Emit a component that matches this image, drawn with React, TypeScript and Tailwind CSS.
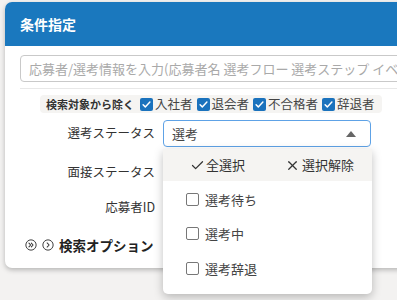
import { Check, X } from "lucide-react";

const jp = { fontFamily: '"Noto Sans CJK JP", "Noto Sans", sans-serif' };

function BlueCheck({ label }: { label: string }) {
  return (
    <label className="flex items-center gap-[2px]">
      <span className="flex h-[13px] w-[13px] items-center justify-center rounded-[2px] bg-[#1a72bd]">
        <svg viewBox="0 0 12 12" className="h-[11px] w-[11px]">
          <path d="M2.3 6.2l2.4 2.4 5-5.2" fill="none" stroke="white" strokeWidth="1.6" strokeLinecap="round" strokeLinejoin="round" />
        </svg>
      </span>
      <span className="text-[12.5px] text-[#444]">{label}</span>
    </label>
  );
}

function CircleChevron({ double }: { double?: boolean }) {
  return (
    <svg viewBox="0 0 14 14" className="h-[12px] w-[12px]">
      <circle cx="7" cy="7" r="6" fill="none" stroke="#333" strokeWidth="1.1" />
      {double ? (
        <path d="M4.6 4.8l2 2.2-2 2.2M7.4 4.8l2 2.2-2 2.2" fill="none" stroke="#333" strokeWidth="1.2" strokeLinecap="round" strokeLinejoin="round" />
      ) : (
        <path d="M6 4.6l2.3 2.4L6 9.4" fill="none" stroke="#333" strokeWidth="1.2" strokeLinecap="round" strokeLinejoin="round" />
      )}
    </svg>
  );
}

function Option({ label }: { label: string }) {
  return (
    <div className="flex h-[34.5px] items-center gap-[6px] pl-[23px]">
      <span className="h-[13px] w-[13px] rounded-[2px] border-[1.5px] border-[#777] bg-white" />
      <span className="text-[13px] text-[#444]">{label}</span>
    </div>
  );
}

export default function App() {
  return (
    <div className="h-[300px] w-[397px] overflow-hidden bg-[#f3f2f1]" style={jp}>
      <div className="ml-[5px] mt-[2px] w-[420px] rounded-tl-[7px] rounded-bl-[7px] bg-white pb-[13px] shadow-[0_2px_5px_rgba(0,0,0,0.25)]">
        <div className="flex h-[44px] items-center rounded-tl-[7px] bg-[#1a78be] pl-[15px] pt-[1px]">
          <h1 className="text-[14px] font-bold text-white">条件指定</h1>
        </div>
        <div className="pl-[15px] pt-[9px]">
          <div className="flex h-[27px] items-center overflow-hidden rounded-[4px] border border-[#c9c9c9] pl-[8px]">
            <span className="whitespace-nowrap text-[13px] text-[#a9a9a9]">
              応募者/選考情報を入力(応募者名 選考フロー 選考ステップ イベント
            </span>
          </div>
          <div className="mt-[6px] h-px bg-[#e8e8e8]" />
          <div className="ml-[20px] mt-[6px] flex h-[18px] w-[342px] items-center gap-[4px] rounded-[4px] bg-[#f5f4f2] pl-[6px]">
            <span className="mr-[2px] text-[11px] font-bold text-[#333]">検索対象から除く</span>
            <BlueCheck label="入社者" />
            <BlueCheck label="退会者" />
            <BlueCheck label="不合格者" />
            <BlueCheck label="辞退者" />
          </div>
          <div className="mt-[7px] flex items-center">
            <span className="w-[135px] text-right text-[12.5px] text-[#333]">選考ステータス</span>
            <div className="relative ml-[8px]">
              <div className="flex h-[27px] w-[208px] items-center justify-between rounded-[4px] border border-[#5ea2e6] pl-[8px] pr-[14px]">
                <span className="text-[13px] text-[#444]">選考</span>
                <svg viewBox="0 0 10 6" className="h-[6px] w-[10px]">
                  <path d="M0 6L5 0l5 6z" fill="#666" />
                </svg>
              </div>
              <div className="absolute left-0 top-[29px] z-10 w-[209px] rounded-b-[5px] bg-white pb-[8px] shadow-[0_3px_10px_rgba(0,0,0,0.25)]">
                <div className="flex h-[32px] items-center bg-[#f5f4f2] text-[13px] text-[#333]">
                  <span className="ml-[27px] flex items-center gap-[1px]">
                    <Check size={15} strokeWidth={2} className="text-[#333]" />
                    全選択
                  </span>
                  <span className="ml-[40px] flex items-center gap-[2px]">
                    <X size={15} strokeWidth={2} className="text-[#333]" />
                    選択解除
                  </span>
                </div>
                <div className="pt-[1px]">
                  <Option label="選考待ち" />
                  <Option label="選考中" />
                  <Option label="選考辞退" />
                </div>
              </div>
            </div>
          </div>
          <div className="mt-[7px] flex h-[36px] items-center">
            <span className="w-[135px] text-right text-[12.5px] text-[#333]">面接ステータス</span>
          </div>
          <div className="flex h-[35px] items-center">
            <span className="w-[135px] text-right text-[12.5px] text-[#333]">応募者ID</span>
          </div>
          <div className="mt-[10px] flex items-center gap-[5px] pl-[5px]">
            <CircleChevron double />
            <CircleChevron />
            <span className="text-[13.5px] font-bold text-[#222]">検索オプション</span>
          </div>
        </div>
      </div>
    </div>
  );
}
